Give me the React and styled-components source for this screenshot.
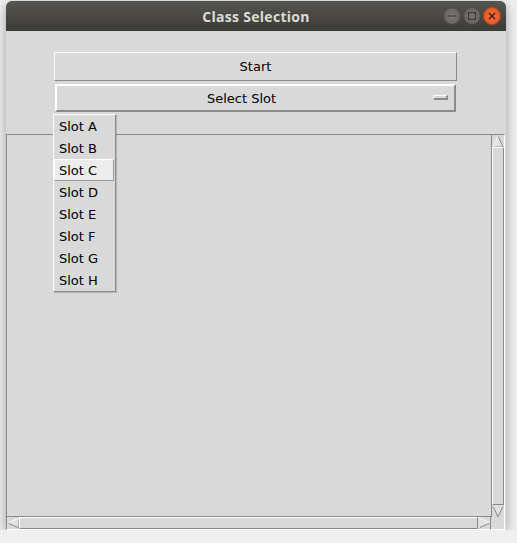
import React from "react";
import styled, { createGlobalStyle } from "styled-components";

const GlobalStyle = createGlobalStyle`
  * { box-sizing: border-box; }
  body {
    margin: 0;
    background: #efefef;
    font-family: "DejaVu Sans", "Liberation Sans", sans-serif;
  }
`;

const slots = ["Slot A", "Slot B", "Slot C", "Slot D", "Slot E", "Slot F", "Slot G", "Slot H"];

const Window = styled.div`
  margin: 1px 0 0 6px;
  width: 500px;
  height: 529px;
  border-radius: 6px 6px 0 0;
  box-shadow: 0 3px 12px rgba(0, 0, 0, 0.35);
  display: flex;
  flex-direction: column;
  overflow: hidden;
`;

const TitleBar = styled.div`
  height: 30px;
  flex: none;
  background: linear-gradient(#57554f, #3c3b37);
  display: flex;
  align-items: center;
  justify-content: center;
  position: relative;
  color: #dfdbd2;
  font-family: "Open Sans", "DejaVu Sans", sans-serif;
  font-weight: 700;
  font-size: 14px;
  letter-spacing: 0.3px;
`;

const Controls = styled.div`
  position: absolute;
  right: 5px;
  top: 6px;
  display: flex;
  gap: 2px;
`;

const Ctl = styled.div`
  width: 18px;
  height: 18px;
  border-radius: 50%;
  background: ${(p) => (p.$close ? "radial-gradient(#f2703f, #e2531d)" : "radial-gradient(#777671, #5f5e5a)")};
  border: 1px solid ${(p) => (p.$close ? "#c1471a" : "#4a4945")};
  display: flex;
  align-items: center;
  justify-content: center;
`;

const Body = styled.div`
  flex: 1;
  background: #d9d9d9;
  display: flex;
  flex-direction: column;
  position: relative;
`;

const ButtonStack = styled.div`
  padding: 21px 49px 0 48px;
  display: flex;
  flex-direction: column;
  gap: 3px;
`;

const TkButton = styled.div`
  height: ${(p) => (p.$raised ? 28 : 29)}px;
  margin: ${(p) => (p.$raised ? "0 1px" : "0")};
  padding-right: ${(p) => (p.$raised ? 28 : 0)}px;
  border-style: solid;
  border-width: ${(p) => (p.$raised ? 2 : 1)}px;
  border-color: #ffffff #8a8a8a #8a8a8a #ffffff;
  display: flex;
  align-items: center;
  justify-content: center;
  font-size: 13px;
  color: #000;
  position: relative;
`;

const Indicator = styled.div`
  position: absolute;
  right: 6px;
  top: 9px;
  width: 15px;
  height: 5px;
  border-style: solid;
  border-width: 1px 2px 2px 1px;
  border-color: #ffffff #8a8a8a #8a8a8a #ffffff;
`;

const Menu = styled.div`
  position: absolute;
  left: 47px;
  top: 83px;
  width: 63px;
  border: 1px solid;
  border-color: #ffffff #8a8a8a #8a8a8a #ffffff;
  background: #d9d9d9;
  box-shadow: 1px 1px 1px rgba(0, 0, 0, 0.15);
  z-index: 5;
`;

const MenuItem = styled.div`
  height: 22px;
  display: flex;
  align-items: center;
  padding-left: 4px;
  margin-right: 1px;
  font-size: 13px;
  color: #000;
  background: ${(p) => (p.$active ? "#ececec" : "transparent")};
  border: 1px solid;
  border-color: ${(p) => (p.$active ? "#ffffff #9a9a9a #9a9a9a #ffffff" : "transparent")};
`;

const ScrollArea = styled.div`
  margin-top: 22px;
  flex: 1;
  display: grid;
  grid-template-columns: 1fr 14px;
  grid-template-rows: 1fr 13px;
  margin-right: 1px;
`;

const Canvas = styled.div`
  border-top: 1px solid #8a8a8a;
  border-left: 1px solid #8a8a8a;
  border-bottom: 1px solid #8a8a8a;
  background: #d9d9d9;
`;

const VBar = styled.div`
  border: 1px solid #8a8a8a;
  border-right-color: #ffffff;
  border-bottom: none;
  display: flex;
  flex-direction: column;
`;

const HBar = styled.div`
  border: 1px solid #8a8a8a;
  border-top: none;
  border-bottom-color: #ffffff;
  display: flex;
`;

const Corner = styled.div`
  border-right: 1px solid #ffffff;
  border-bottom: 1px solid #ffffff;
`;

const Slider = styled.div`
  flex: 1;
  border: 1px solid;
  border-color: #ffffff #8a8a8a #8a8a8a #ffffff;
`;

const ArrowBox = styled.svg`
  flex: none;
  display: block;
`;

const Arrow = ({ dir }) => {
  const pts = {
    up: "6,1 11,12 1,12",
    down: "1,1 11,1 6,12",
    left: "1,6 12,1 12,11",
    right: "1,1 12,6 1,11",
  }[dir];
  return (
    <ArrowBox width="12" height="12" viewBox="0 0 12 12">
      <polygon points={pts} fill="#e2e2e2" stroke="#8a8a8a" strokeWidth="1" />
      <polyline
        points={{ up: "1,12 6,1", down: "1,1 11,1", left: "12,1 1,6", right: "1,11 1,1 12,6" }[dir]}
        fill="none"
        stroke="#ffffff"
        strokeWidth="1.2"
      />
    </ArrowBox>
  );
};

export default function App() {
  return (
    <>
      <GlobalStyle />
      <Window>
        <TitleBar>
          Class Selection
          <Controls>
            <Ctl>
              <svg width="8" height="8" viewBox="0 0 8 8">
                <line x1="0" y1="4" x2="8" y2="4" stroke="#3a3935" strokeWidth="1.2" />
              </svg>
            </Ctl>
            <Ctl>
              <svg width="8" height="8" viewBox="0 0 8 8">
                <rect x="0.6" y="0.6" width="6.8" height="6.8" fill="none" stroke="#3a3935" strokeWidth="1.2" />
              </svg>
            </Ctl>
            <Ctl $close>
              <svg width="8" height="8" viewBox="0 0 8 8">
                <path d="M1 1 L7 7 M7 1 L1 7" stroke="#3b1a0d" strokeWidth="1.3" />
              </svg>
            </Ctl>
          </Controls>
        </TitleBar>
        <Body>
          <ButtonStack>
            <TkButton>Start</TkButton>
            <TkButton $raised>
              Select Slot
              <Indicator />
            </TkButton>
          </ButtonStack>
          <Menu>
            {slots.map((s) => (
              <MenuItem key={s} $active={s === "Slot C"}>
                {s}
              </MenuItem>
            ))}
          </Menu>
          <ScrollArea>
            <Canvas />
            <VBar>
              <Arrow dir="up" />
              <Slider />
              <Arrow dir="down" />
            </VBar>
            <HBar>
              <Arrow dir="left" />
              <Slider />
              <Arrow dir="right" />
            </HBar>
            <Corner />
          </ScrollArea>
        </Body>
      </Window>
    </>
  );
}
